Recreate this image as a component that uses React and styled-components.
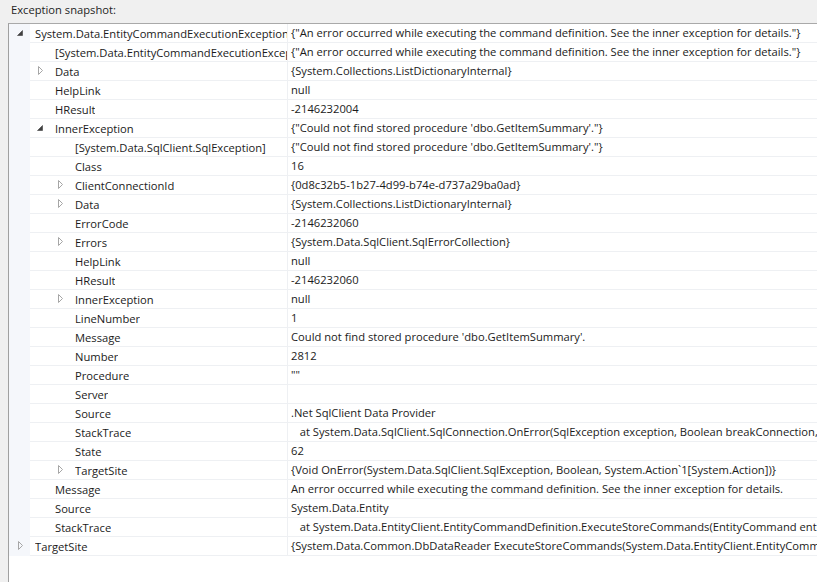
import React from "react";
import styled, { createGlobalStyle } from "styled-components";

const GlobalStyle = createGlobalStyle`
  html, body {
    margin: 0;
    padding: 0;
    background: #f0f0f0;
    font-family: "Open Sans", "Noto Sans", sans-serif;
    font-size: 11.2px;
    color: #1b1b1b;
  }
`;

const Page = styled.div`
  width: 817px;
  height: 582px;
  overflow: hidden;
  display: flex;
  flex-direction: column;
`;

const Title = styled.div`
  height: 23px;
  line-height: 20px;
  padding-left: 11px;
  color: #1e1e1e;
`;

const Panel = styled.div`
  flex: 1;
  margin-left: 8px;
  border-top: 1px solid #a9a9a9;
  border-left: 1px solid #a0a0a0;
  background: #fff;
  overflow: hidden;
`;

const Row = styled.div`
  display: flex;
  height: 19px;
  white-space: nowrap;
  background:
    linear-gradient(#eef0f3, #eef0f3) no-repeat 21px 100% / calc(100% - 21px) 1px,
    linear-gradient(to right, #f5f7fb 21px, #fff 21px);
`;

const NameCell = styled.div`
  width: 278px;
  flex: none;
  display: flex;
  align-items: center;
  padding-left: ${(p) => 5 + p.$level * 20}px;
  box-sizing: border-box;
  overflow: hidden;
  height: 18px;
`;

const Expander = styled.span`
  width: 12px;
  flex: none;
  display: flex;
  align-items: center;
  justify-content: center;
  margin-right: 9px;
`;

const Text = styled.span`
  overflow: hidden;
  white-space: pre;
`;

const ValueCell = styled.div`
  flex: 1;
  height: 18px;
  line-height: 18px;
  border-left: 1px solid #eef0f3;
  padding-left: 3px;
  white-space: pre;
  overflow: hidden;
`;

function Arrow({ state }) {
  if (state === "open") {
    return (
      <svg width="12" height="12" viewBox="0 0 12 12">
        <path d="M8.5 3.5 L8.5 8.5 L3.5 8.5 Z" fill="#404040" stroke="#404040" strokeWidth="0.6" />
      </svg>
    );
  }
  if (state === "closed") {
    return (
      <svg width="12" height="12" viewBox="0 0 12 12">
        <path d="M4.5 1.5 L8.5 5.5 L4.5 9.5 Z" fill="none" stroke="#a6a6a6" strokeWidth="1" />
      </svg>
    );
  }
  return null;
}

const msg =
  "An error occurred while executing the command definition. See the inner exception for details.";
const sqlMsg = "Could not find stored procedure 'dbo.GetItemSummary'.";

const rows = [
  [0, "open", "System.Data.EntityCommandExecutionException", `{"${msg}"}`],
  [1, null, "[System.Data.EntityCommandExecutionException]", `{"${msg}"}`],
  [1, "closed", "Data", "{System.Collections.ListDictionaryInternal}"],
  [1, null, "HelpLink", "null"],
  [1, null, "HResult", "-2146232004"],
  [1, "open", "InnerException", `{"${sqlMsg}"}`],
  [2, null, "[System.Data.SqlClient.SqlException]", `{"${sqlMsg}"}`],
  [2, null, "Class", "16"],
  [2, "closed", "ClientConnectionId", "{0d8c32b5-1b27-4d99-b74e-d737a29ba0ad}"],
  [2, "closed", "Data", "{System.Collections.ListDictionaryInternal}"],
  [2, null, "ErrorCode", "-2146232060"],
  [2, "closed", "Errors", "{System.Data.SqlClient.SqlErrorCollection}"],
  [2, null, "HelpLink", "null"],
  [2, null, "HResult", "-2146232060"],
  [2, "closed", "InnerException", "null"],
  [2, null, "LineNumber", "1"],
  [2, null, "Message", sqlMsg],
  [2, null, "Number", "2812"],
  [2, null, "Procedure", '""'],
  [2, null, "Server", ""],
  [2, null, "Source", ".Net SqlClient Data Provider"],
  [
    2,
    null,
    "StackTrace",
    "   at System.Data.SqlClient.SqlConnection.OnError(SqlException exception, Boolean breakConnection, Action`1 wrapCloseInAction)",
  ],
  [2, null, "State", "62"],
  [
    2,
    "closed",
    "TargetSite",
    "{Void OnError(System.Data.SqlClient.SqlException, Boolean, System.Action`1[System.Action])}",
  ],
  [1, null, "Message", msg],
  [1, null, "Source", "System.Data.Entity"],
  [
    1,
    null,
    "StackTrace",
    "   at System.Data.EntityClient.EntityCommandDefinition.ExecuteStoreCommands(EntityCommand entityCommand, CommandBehavior behavior)",
  ],
  [
    0,
    "closed",
    "TargetSite",
    "{System.Data.Common.DbDataReader ExecuteStoreCommands(System.Data.EntityClient.EntityCommand, System.Data.CommandBehavior)}",
  ],
];

export default function App() {
  return (
    <Page>
      <GlobalStyle />
      <Title>Exception snapshot:</Title>
      <Panel>
        {rows.map(([level, state, name, value], i) => (
          <Row key={i}>
            <NameCell $level={level}>
              <Expander>
                <Arrow state={state} />
              </Expander>
              <Text>{name}</Text>
            </NameCell>
            <ValueCell>{value}</ValueCell>
          </Row>
        ))}
      </Panel>
    </Page>
  );
}
